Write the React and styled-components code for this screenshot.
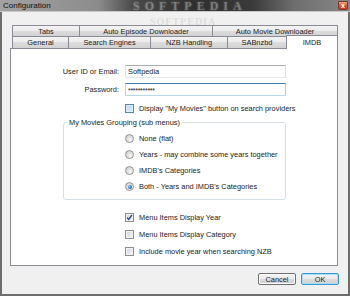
import React from "react"
import styled, { createGlobalStyle, css } from "styled-components"

const GlobalStyle = createGlobalStyle`
    html, body {
        margin: 0;
        padding: 0;
        background: #ffffff;
    }
    body {
        font-family: "Liberation Sans", Arial, sans-serif;
        font-size: 7.4px;
        color: #1c1c1c;
    }
`

const Window = styled.div`
    width: 350px;
    height: 296px;
    display: flex;
    flex-direction: column;
    overflow: hidden;
`

const TitleBar = styled.div`
    height: 11px;
    flex: none;
    display: flex;
    align-items: center;
    padding: 0 2px 0 3px;
    position: relative;
    overflow: hidden;
    background: linear-gradient(90deg, #a2a2a2 0%, #8c8c8c 28%, #4a4a4a 38%, #2f2f2f 55%, #3a3a3a 72%, #6e6e6e 84%, #878787 100%);
    border-bottom: 1px solid #c9c9c9;
`

const Title = styled.span`
    font-size: 8px;
    color: #101010;
    flex: 1;
`

const TitleWatermark = styled.span`
    position: absolute;
    left: 133px;
    top: 0;
    height: 11px;
    line-height: 12px;
    font-family: "Liberation Serif", serif;
    font-weight: bold;
    font-size: 12px;
    letter-spacing: 5px;
    color: rgba(190, 190, 190, 0.35);
    text-shadow: 0 0 2px rgba(200, 200, 200, 0.4);
`

const CloseButton = styled.span`
    width: 10px;
    height: 9px;
    margin-top: -1px;
    border: 1px solid #7a3a2a;
    border-radius: 0 0 2px 2px;
    box-sizing: border-box;
    background: linear-gradient(#e8a08c, #d45c3c 50%, #c0391f);
    color: #ffffff;
    font-size: 7px;
    line-height: 7px;
    text-align: center;
    font-weight: bold;
`

const Frame = styled.div`
    flex: 1;
    display: flex;
    flex-direction: column;
    background: #f0f0f0;
    border: solid #6d6d6d;
    border-width: 0 2px 2px 2px;
    padding: 13px 10px 0 8px;
`

const TabControl = styled.div`
    position: relative;
    display: flex;
    flex-direction: column;
`

const TabWatermark = styled.span`
    position: absolute;
    left: 140px;
    top: -8px;
    line-height: 10px;
    font-family: "Liberation Serif", serif;
    font-weight: bold;
    font-size: 10px;
    letter-spacing: 1px;
    color: rgba(150, 150, 150, 0.22);
    pointer-events: none;
    z-index: 3;
`

const TabRow = styled.div`
    display: flex;
    padding: 0 2px;
    height: ${props => props.height}px;
`

const Tab = styled.div`
    width: ${props => props.width}px;
    flex: none;
    box-sizing: border-box;
    margin-right: -1px;
    border: 1px solid #898c95;
    border-bottom: none;
    border-radius: 1px 1px 0 0;
    background: linear-gradient(#f3f3f3 0%, #ececec 45%, #dddddd 50%, #d2d2d2 100%);
    display: flex;
    align-items: center;
    justify-content: center;
    color: #1c1c1c;
    white-space: nowrap;
    ${props => props.selected && css`
        background: #ffffff;
        height: 14px;
        margin-top: -1px;
        position: relative;
        z-index: 2;
        align-items: flex-start;
        padding-top: 2px;
    `}
`

const Panel = styled.div`
    height: 218px;
    box-sizing: border-box;
    background: #ffffff;
    border: 1px solid #898c95;
    display: flex;
    flex-direction: column;
`

const FormGrid = styled.div`
    display: grid;
    grid-template-columns: 108px 161px;
    column-gap: 6px;
    row-gap: 5px;
    align-items: center;
    padding-top: 16px;
`

const Label = styled.span`
    text-align: right;
`

const Input = styled.div`
    height: 13px;
    box-sizing: border-box;
    border: 1px solid;
    border-color: #abadb3 #dbdfe6 #e3e9ef #e2e3ea;
    border-radius: 1px;
    padding: 0 2px;
    display: flex;
    align-items: center;
    background: #ffffff;
    ${props => props.focused && css`
        border-color: #3d7bad #a4c9e3 #b7d9ed #b5cfe7;
    `}
`

const Stars = styled.span`
    letter-spacing: -0.3px;
    font-size: 7px;
    padding-top: 2px;
`

const OptionRow = styled.label`
    display: flex;
    align-items: center;
    gap: 5px;
    height: 9px;
    white-space: nowrap;
`

const CheckField = styled.div`
    grid-column: 2;
    margin-top: 3px;
`

const Box = styled.span`
    width: 9px;
    height: 9px;
    flex: none;
    box-sizing: border-box;
    border: 1px solid #8f8f8f;
    background: linear-gradient(135deg, #cfd2d6 0%, #e8e9ea 60%, #f7f7f7 100%);
    box-shadow: inset 0 0 0 1px #f4f4f4;
    display: flex;
    align-items: center;
    justify-content: center;
    ${props => props.hot && css`
        border-color: #5586a3;
        background: linear-gradient(135deg, #b5d3ef 0%, #cfe4f7 60%, #e4f1fb 100%);
        box-shadow: inset 0 0 0 1px #def0fd;
    `}
`

const Radio = styled.span`
    width: 9px;
    height: 9px;
    flex: none;
    box-sizing: border-box;
    border-radius: 50%;
    border: 1px solid #929292;
    background: radial-gradient(circle at 65% 70%, #f8f8f8 0%, #e2e2e2 45%, #c8c8c8 100%);
    display: flex;
    align-items: center;
    justify-content: center;
`

const Dot = styled.span`
    width: 4px;
    height: 4px;
    border-radius: 50%;
    background: radial-gradient(circle at 35% 35%, #8ed0f8 0%, #1d6fb3 60%, #0d4a80 100%);
`

const GroupBox = styled.fieldset`
    margin: 5px 0 0 52px;
    width: 223px;
    box-sizing: border-box;
    border: 1px solid #d5dfe5;
    border-radius: 3px;
    padding: 7px 0 8px 0;
`

const Legend = styled.legend`
    margin-left: 3px;
    padding: 0 2px;
    line-height: 9px;
    color: #1c1c1c;
`

const OptionList = styled.div`
    display: flex;
    flex-direction: column;
    gap: ${props => props.gap}px;
    padding-left: ${props => props.indent}px;
    margin-top: ${props => props.top}px;
`

const Footer = styled.div`
    display: flex;
    justify-content: flex-end;
    gap: 5px;
    margin: 7px -1px 0 0;
`

const Button = styled.div`
    width: 38px;
    height: 12px;
    box-sizing: border-box;
    border: 1px solid #707070;
    border-radius: 2px;
    background: linear-gradient(#f2f2f2 0%, #ebebeb 45%, #dddddd 50%, #cfcfcf 100%);
    box-shadow: inset 0 0 0 1px #fbfbfb;
    display: flex;
    align-items: center;
    justify-content: center;
    ${props => props.primary && css`
        border-color: #3c9ad3;
        box-shadow: inset 0 0 0 1px #a8ddf6;
    `}
`

const CheckMark = () => (
    <svg width="7" height="7" viewBox="0 0 7 7">
        <path d="M1 3.6 L2.7 5.4 L6 0.8" fill="none" stroke="#23408e" strokeWidth="1.3" />
    </svg>
)

const radios = [
    { label: "None (flat)" },
    { label: "Years - may combine some years together" },
    { label: "IMDB's Categories" },
    { label: "Both - Years and IMDB's Categories", checked: true },
]

const checks = [
    { label: "Menu Items Display Year", checked: true },
    { label: "Menu Items Display Category" },
    { label: "Include movie year when searching NZB" },
]

export default function App() {
    return (
        <Window>
            <GlobalStyle />
            <TitleBar>
                <Title>Configuration</Title>
                <TitleWatermark>SOFTPEDIA</TitleWatermark>
                <CloseButton>x</CloseButton>
            </TitleBar>
            <Frame>
                <TabControl>
                    <TabWatermark>SOFTPEDIA</TabWatermark>
                    <TabRow height={11}>
                        <Tab width={68}>Tabs</Tab>
                        <Tab width={134}>Auto Episode Downloader</Tab>
                        <Tab width={126}>Auto Movie Downloader</Tab>
                    </TabRow>
                    <TabRow height={12}>
                        <Tab width={57}>General</Tab>
                        <Tab width={83}>Search Engines</Tab>
                        <Tab width={78}>NZB Handling</Tab>
                        <Tab width={60}>SABnzbd</Tab>
                        <Tab width={52} selected>IMDB</Tab>
                    </TabRow>
                    <Panel>
                        <FormGrid>
                            <Label>User ID or Email:</Label>
                            <Input>Softpedia</Input>
                            <Label>Password:</Label>
                            <Input focused><Stars>***********</Stars></Input>
                            <CheckField>
                                <OptionRow>
                                    <Box hot />
                                    Display "My Movies" button on search providers
                                </OptionRow>
                            </CheckField>
                        </FormGrid>
                        <GroupBox>
                            <Legend>My Movies Grouping (sub menus)</Legend>
                            <OptionList gap={7} indent={61} top={0}>
                                {radios.map(r => (
                                    <OptionRow key={r.label}>
                                        <Radio>{r.checked && <Dot />}</Radio>
                                        {r.label}
                                    </OptionRow>
                                ))}
                            </OptionList>
                        </GroupBox>
                        <OptionList gap={8} indent={114} top={13}>
                            {checks.map(c => (
                                <OptionRow key={c.label}>
                                    <Box>{c.checked && <CheckMark />}</Box>
                                    {c.label}
                                </OptionRow>
                            ))}
                        </OptionList>
                    </Panel>
                </TabControl>
                <Footer>
                    <Button>Cancel</Button>
                    <Button primary>OK</Button>
                </Footer>
            </Frame>
        </Window>
    )
}
